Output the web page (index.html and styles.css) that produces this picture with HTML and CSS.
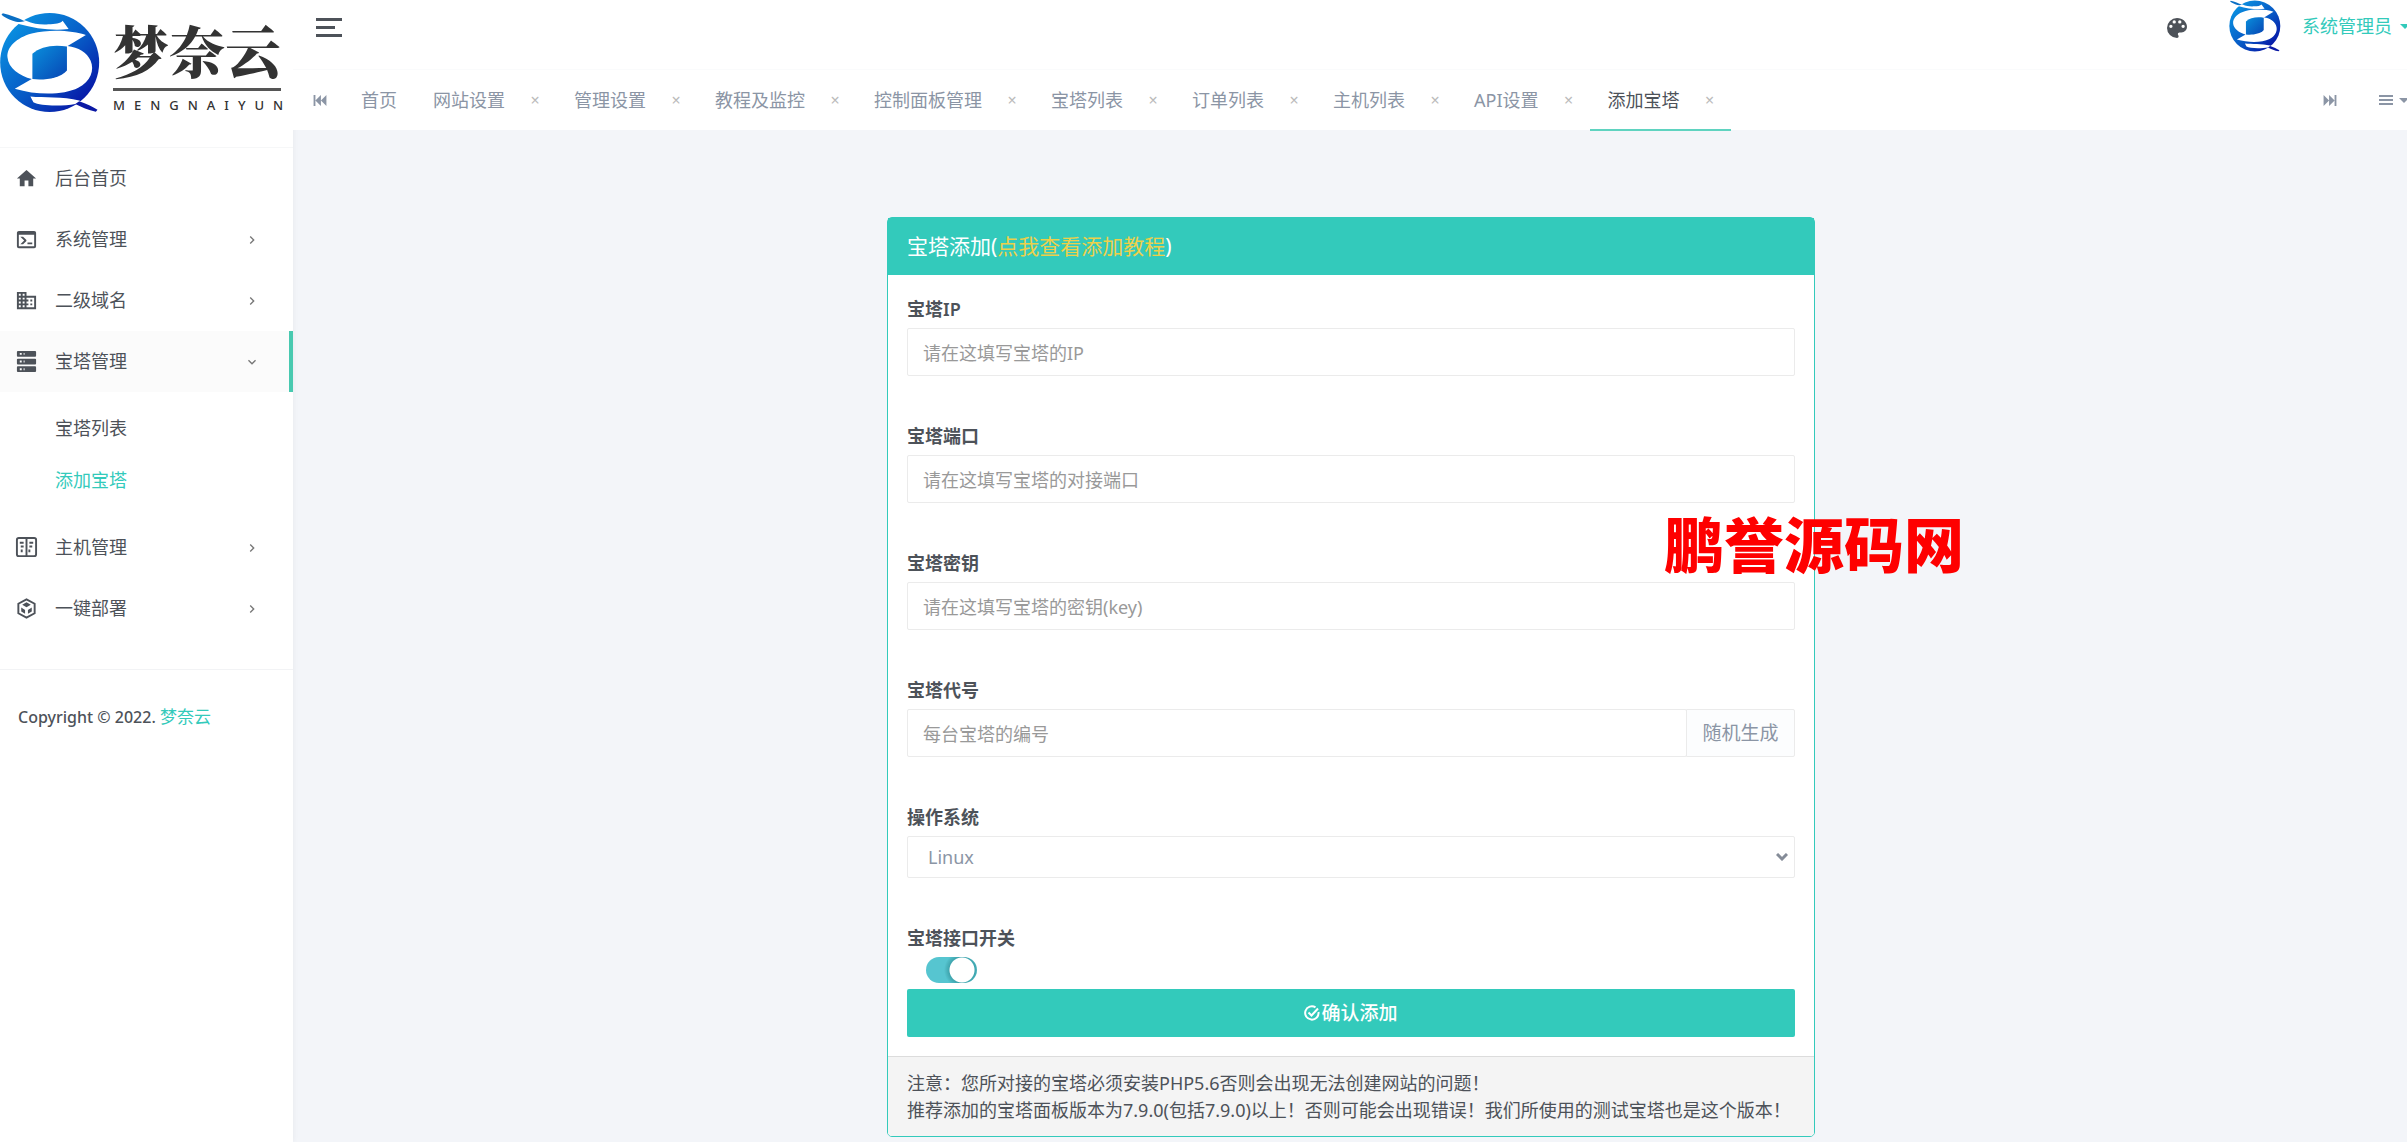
FILE: index.html
```html
<!DOCTYPE html>
<html lang="zh-CN">
<head>
<meta charset="utf-8">
<title>添加宝塔</title>
<link rel="stylesheet" href="styles.css">
</head>
<body>
<svg class="defs" aria-hidden="true">
  <defs>
    <linearGradient id="blue" x1="0" y1="0" x2="1" y2="1">
      <stop offset="0.1" stop-color="#0a93e2"/>
      <stop offset="0.55" stop-color="#0757c4"/>
      <stop offset="0.95" stop-color="#0708a0"/>
    </linearGradient>
    <linearGradient id="core" x1="0" y1="0" x2="1" y2="1">
      <stop offset="0" stop-color="#0a8fdc"/>
      <stop offset="1" stop-color="#0745b4"/>
    </linearGradient>
    <symbol id="emblem" viewBox="0 34 300 304">
      <circle cx="149" cy="186" r="149" fill="url(#blue)"/>
      <path fill="#fff" d="M40 50L78 60C100 70 125 73 145 71C165 70 182 68 188 60L206 85C160 91 105 84 56 70Z"/>
      <path fill="#0a6fc4" d="M8 38C30 44 55 52 74 62C60 66 48 64 38 60C24 55 12 50 4 42Z"/>
      <path fill="#fff" d="M258 103C220 90 150 84 95 99C48 112 20 140 22 170C24 202 58 226 95 236L44 265C110 285 190 285 235 262C272 243 285 210 272 180C262 155 235 140 203 136Z"/>
      <path fill="url(#core)" d="M97 160C120 138 160 131 201 138V210C180 235 130 240 97 236Z"/>
      <path fill="#fff" d="M91 288C130 292 190 288 238 300L256 312L226 311C190 318 120 318 100 306Z"/>
      <path fill="#0a18a4" d="M238 303C260 310 278 320 293 328L288 334C265 329 245 321 226 311Z"/>
    </symbol>
    <symbol id="chevron" viewBox="0 0 24 24"><path d="M8.59 16.58L13.17 12L8.59 7.41L10 6L16 12L10 18Z"/></symbol>
  </defs>
</svg>
<div class="layout">
  <aside class="sidebar">
    <a class="brand" href="#">
      <svg class="brand-mark" aria-hidden="true"><use href="#emblem"/></svg>
      <span class="brand-text">
        <span class="brand-name">梦奈云</span>
        <span class="brand-sub">MENGNAIYUN</span>
      </span>
    </a>
    <nav class="menu">
      <a class="item" href="#">
        <svg class="icon" viewBox="0 0 24 24"><path d="M10 20V14H14V20H19V12H22L12 3L2 12H5V20Z"/></svg>
        <span>后台首页</span>
      </a>
      <a class="item" href="#">
        <svg class="icon" viewBox="0 0 24 24"><path d="M20 19V7H4V19H20M20 3A2 2 0 0 1 22 5V19A2 2 0 0 1 20 21H4A2 2 0 0 1 2 19V5C2 3.89 2.9 3 4 3H20M13 17V15H18V17H13M9.58 13L5.57 9H8.4L11.7 12.3C12.09 12.69 12.09 13.33 11.7 13.72L8.42 17H5.59Z"/></svg>
        <span>系统管理</span>
        <svg class="arrow"><use href="#chevron"/></svg>
      </a>
      <a class="item" href="#">
        <svg class="icon" viewBox="0 0 24 24"><path d="M18 15H16V17H18M18 11H16V13H18M20 19H12V17H14V15H12V13H14V11H12V9H20M10 7H8V5H10M10 11H8V9H10M10 15H8V13H10M10 19H8V17H10M6 7H4V5H6M6 11H4V9H6M6 15H4V13H6M6 19H4V17H6M12 7V3H2V21H22V7Z"/></svg>
        <span>二级域名</span>
        <svg class="arrow"><use href="#chevron"/></svg>
      </a>
      <a class="item open" href="#">
        <svg class="icon" viewBox="0 0 24 24"><path fill-rule="evenodd" d="M3 1H21A1 1 0 0 1 22 2V6A1 1 0 0 1 21 7H3A1 1 0 0 1 2 6V2A1 1 0 0 1 3 1M3 9H21A1 1 0 0 1 22 10V14A1 1 0 0 1 21 15H3A1 1 0 0 1 2 14V10A1 1 0 0 1 3 9M3 17H21A1 1 0 0 1 22 18V22A1 1 0 0 1 21 23H3A1 1 0 0 1 2 22V18A1 1 0 0 1 3 17M5 3V5H7V3M9 3V5H10V3M5 11V13H7V11M9 11V13H10V11M5 19V21H7V19M9 19V21H10V19"/></svg>
        <span>宝塔管理</span>
        <svg class="arrow"><use href="#chevron"/></svg>
      </a>
      <div class="submenu">
        <a href="#">宝塔列表</a>
        <a class="current" href="#">添加宝塔</a>
      </div>
      <a class="item" href="#">
        <svg class="icon line" viewBox="0 0 24 24"><rect x="2" y="2" width="20" height="19" rx="2"/><path d="M12 2V21M5 7H9M15 7H19M6 11H9M15 11H18M7 14V17M15 14V17"/></svg>
        <span>主机管理</span>
        <svg class="arrow"><use href="#chevron"/></svg>
      </a>
      <a class="item" href="#">
        <svg class="icon line" viewBox="0 0 24 24"><path d="M12 2.500L20.500 7V17L12 21.500L3.500 17V7Z"/><path class="solid" d="M12 5.500L16.500 8.200L12 10.800L7.500 8.200ZM6.500 11L10.500 13.500V17.500L6.500 15ZM17.500 11L13.500 13.500V17.500L17.500 15Z"/></svg>
        <span>一键部署</span>
        <svg class="arrow"><use href="#chevron"/></svg>
      </a>
    </nav>
    <p class="copyright">Copyright © 2022. <a href="#">梦奈云</a></p>
  </aside>

  <div class="page">
    <header class="topbar">
      <button class="toggler" type="button" aria-label="折叠菜单"><i></i><i></i><i></i></button>
      <div class="tools">
        <button class="bare" type="button" aria-label="主题">
          <svg class="palette" viewBox="3 3 18 18"><path fill-rule="evenodd" d="M17.500 12A1.500 1.500 0 1 1 17.500 9A1.500 1.500 0 1 1 17.500 12M14.500 8A1.500 1.500 0 1 1 14.500 5A1.500 1.500 0 1 1 14.500 8M9.500 8A1.500 1.500 0 1 1 9.500 5A1.500 1.500 0 1 1 9.500 8M6.500 12A1.500 1.500 0 1 1 6.500 9A1.500 1.500 0 1 1 6.500 12M12 3A9 9 0 0 0 12 21A1.500 1.500 0 0 0 13.500 19.500C13.500 19.110 13.350 18.760 13.110 18.500C12.880 18.230 12.730 17.880 12.730 17.500A1.500 1.500 0 0 1 14.230 16H16A5 5 0 0 0 21 11C21 6.580 16.970 3 12 3Z"/></svg>
        </button>
        <a class="user" href="#">
          <svg class="avatar" aria-hidden="true"><use href="#emblem"/></svg>
          <span>系统管理员</span>
          <i class="caret"></i>
        </a>
      </div>
    </header>

    <div class="tabbar">
      <button class="bare" type="button" aria-label="向左滚动">
        <svg class="skip" viewBox="0 0 14 12"><path d="M0 0H2V12H0ZM8 0V12L2 6ZM14 0V12L8 6Z"/></svg>
      </button>
      <nav class="tabs">
        <a class="tab" href="#">首页</a>
        <a class="tab" href="#">网站设置<span class="close">×</span></a>
        <a class="tab" href="#">管理设置<span class="close">×</span></a>
        <a class="tab" href="#">教程及监控<span class="close">×</span></a>
        <a class="tab" href="#">控制面板管理<span class="close">×</span></a>
        <a class="tab" href="#">宝塔列表<span class="close">×</span></a>
        <a class="tab" href="#">订单列表<span class="close">×</span></a>
        <a class="tab" href="#">主机列表<span class="close">×</span></a>
        <a class="tab" href="#">API设置<span class="close">×</span></a>
        <a class="tab active" href="#">添加宝塔<span class="close">×</span></a>
      </nav>
      <button class="bare" type="button" aria-label="向右滚动">
        <svg class="skip" viewBox="0 0 14 12"><path d="M12 0H14V12H12ZM6 0V12L12 6ZM0 0V12L6 6Z"/></svg>
      </button>
      <button class="bare more" type="button" aria-label="标签操作">
        <svg class="bars" viewBox="0 0 14 10"><path d="M0 0H14V2H0ZM0 4H14V6H0ZM0 8H14V10H0Z"/></svg>
        <i class="caret"></i>
      </button>
    </div>

    <main class="content">
      <form class="card">
        <header class="card-head">宝塔添加(<a href="#">点我查看添加教程</a>)</header>
        <div class="card-body">
          <div class="field">
            <label for="ip">宝塔IP</label>
            <input id="ip" type="text" placeholder="请在这填写宝塔的IP">
          </div>
          <div class="field">
            <label for="port">宝塔端口</label>
            <input id="port" type="text" placeholder="请在这填写宝塔的对接端口">
          </div>
          <div class="field">
            <label for="key">宝塔密钥</label>
            <input id="key" type="text" placeholder="请在这填写宝塔的密钥(key)">
          </div>
          <div class="field">
            <label for="code">宝塔代号</label>
            <div class="group">
              <input id="code" type="text" placeholder="每台宝塔的编号">
              <button type="button">随机生成</button>
            </div>
          </div>
          <div class="field">
            <label for="os">操作系统</label>
            <div class="select">
              <select id="os"><option>Linux</option><option>Windows</option></select>
              <svg viewBox="0 0 12 8"><path d="M1 1L6 6L11 1"/></svg>
            </div>
          </div>
          <div class="field last">
            <label for="switch">宝塔接口开关</label>
            <input id="switch" class="switch" type="checkbox" checked>
          </div>
          <button class="submit" type="submit">
            <svg viewBox="0 0 16 16"><path d="M14.500 7A6.700 6.700 0 1 1 11.500 2.300M4.500 7.500L7.500 10.500L14 3.500"/></svg>确认添加
          </button>
        </div>
        <footer class="card-foot">
          <p>注意：您所对接的宝塔必须安装PHP5.6否则会出现无法创建网站的问题！</p>
          <p>推荐添加的宝塔面板版本为7.9.0(包括7.9.0)以上！否则可能会出现错误！我们所使用的测试宝塔也是这个版本！</p>
        </footer>
        <div class="watermark">鹏誉源码网</div>
      </form>
    </main>
  </div>
</div>
</body>
</html>
```
FILE: styles.css
```css
* { box-sizing: border-box; }

body {
  margin: 0;
  background: #f3f5f9;
  color: #4d5259;
  font: 18px/27px "Noto Sans", "Noto Sans CJK SC", sans-serif;
}

a { color: inherit; text-decoration: none; }
p { margin: 0; }
button, input, select { font: inherit; }
svg { display: block; flex: none; fill: currentColor; }
.defs { position: absolute; width: 0; height: 0; }

.layout { display: flex; min-height: 100vh; }

/* Sidebar */
.sidebar {
  flex: none;
  width: 293px;
  background: #fff;
  box-shadow: 0 0 6px rgba(0, 0, 0, 0.06);
}
.brand {
  display: flex;
  gap: 13px;
  height: 148px;
  padding-top: 12px;
  border-bottom: 1px solid #f6f7f8;
  color: #333;
}
.brand-mark { width: 100px; height: 101px; }
.brand-text { display: flex; flex-direction: column; width: 168px; }
.brand-name {
  height: 79px;
  border-bottom: 3px solid #555;
  font: 900 56px/74px "Noto Serif CJK SC", "Noto Sans CJK SC", serif;
}
.brand-sub {
  margin-top: 6px;
  font-size: 13px;
  line-height: 16px;
  font-weight: 500;
  letter-spacing: 9px;
  white-space: nowrap;
}
.menu { padding-bottom: 30px; border-bottom: 1px solid #f2f3f5; }
.item {
  display: flex;
  align-items: center;
  height: 61px;
  padding: 0 33px 0 15px;
}
.item .icon { width: 23px; height: 23px; margin-right: 17px; }
.icon.line { fill: none; stroke: currentColor; stroke-width: 2; }
.icon .solid { fill: currentColor; stroke: none; }
.arrow { width: 16px; height: 16px; margin-left: auto; color: #777; }
.item.open { background: #fbfbfb; border-right: 4px solid #48c9b0; padding-right: 29px; }
.open .arrow { transform: rotate(90deg); }
.submenu { padding: 10px 0 11px; }
.submenu a { display: block; padding-left: 55px; line-height: 52px; }
.submenu .current, .copyright a { color: #33cabb; }
.copyright {
  padding: 33px 18px;
  font-size: 16px;
  font-weight: 500;
}
.copyright a { font-size: 17px; font-weight: 400; }

/* Top bar and tabs */
.page { flex: 1; min-width: 0; }
.bare {
  display: flex;
  align-items: center;
  gap: 6px;
  padding: 0;
  border: 0;
  background: none;
  color: #8b95a5;
}
.topbar {
  display: flex;
  justify-content: space-between;
  height: 70px;
  padding-left: 23px;
  background: #fff;
  border-bottom: 1px solid #fafbfc;
}
.toggler {
  display: flex;
  flex-direction: column;
  gap: 5px;
  padding: 18px 0 0;
  border: 0;
  background: none;
}
.toggler i { width: 26px; height: 3px; background: #4d5259; }
.toggler i:nth-child(2) { width: 19px; }
.tools { display: flex; align-items: flex-start; gap: 42px; overflow: hidden; }
.tools .bare { height: 56px; color: #4d5259; }
.palette { width: 20px; height: 20px; }
.user { display: flex; align-items: center; height: 52px; color: #33cabb; }
.avatar { width: 52px; height: 52px; margin-right: 21px; }
.caret {
  width: 0;
  border: 5px solid transparent;
  border-top-color: currentColor;
  border-bottom: 0;
}
.user .caret { margin: 0 -3px 0 8px; }
.tabbar {
  display: flex;
  align-items: center;
  height: 60px;
  padding-left: 20px;
  background: #fff;
}
.tabs { display: flex; flex: 1; padding-left: 16px; }
.tab {
  display: flex;
  align-items: center;
  height: 62px;
  padding: 2px 18px 0;
  border-bottom: 2px solid transparent;
  color: #8b95a5;
  white-space: nowrap;
}
.tab .close {
  width: 16px;
  margin: 0 -5px 0 22px;
  color: #bbb;
  font-size: 16px;
  text-align: center;
}
.tab.active { border-bottom-color: #5fd3c0; color: #4d5259; }
.skip { width: 14px; height: 11px; }
.bars { width: 14px; height: 10px; }
.more { margin: 0 -2px 0 42px; }

/* Form card */
.content { padding: 87px 18px 5px 20px; }
.card {
  position: relative;
  max-width: 928px;
  margin: 0 auto;
  background: #fff;
  border: 1px solid #33cabb;
  border-radius: 5px;
}
.card-head {
  padding: 15px 19px;
  background: #33cabb;
  color: #fff;
  font-size: 21px;
}
.card-head a { color: #edd04a; }
.card-body { padding: 21px 19px 19px; }
.field { margin-bottom: 47px; }
.field.last { margin-bottom: 6px; }
.field label { display: block; margin-bottom: 5px; font-weight: 600; }
.field input[type="text"], .field select {
  display: block;
  width: 100%;
  height: 48px;
  padding: 1px 15px 0;
  border: 1px solid #ebebeb;
  border-radius: 2px;
  background: #fff;
  color: #8b95a5;
}
.field ::placeholder { color: #999; opacity: 1; }
.group { display: flex; }
.group button {
  flex: none;
  width: 109px;
  margin-left: -1px;
  padding: 0;
  border: 1px solid #ebebeb;
  border-radius: 0 2px 2px 0;
  background: #fcfdfe;
  color: #8b95a5;
  font-size: 19px;
}
.select { display: grid; align-items: center; }
.select > * { grid-area: 1 / 1; }
.field select { height: 42px; padding: 0 20px; appearance: none; }
.select svg {
  justify-self: end;
  width: 12px;
  height: 8px;
  margin-right: 7px;
  fill: none;
  stroke: #858c98;
  stroke-width: 3;
  pointer-events: none;
}
.switch {
  display: block;
  appearance: none;
  width: 51px;
  height: 26px;
  margin: 0 0 0 19px;
  border-radius: 13px;
  background: radial-gradient(circle at 36px 13px, #fff 12px, #3fa5ae 13px, #56c5d0 18px);
}
.submit {
  display: flex;
  align-items: center;
  justify-content: center;
  gap: 1px;
  width: 100%;
  height: 48px;
  border: 0;
  border-radius: 2px;
  background: #33cabb;
  color: #fff;
  font-size: 19px;
  font-weight: 500;
}
.submit svg { width: 16px; height: 16px; fill: none; stroke: currentColor; stroke-width: 2; }
.card-foot {
  padding: 13px 19px 12px;
  border-top: 1px solid #dcdcdc;
  border-radius: 0 0 4px 4px;
  background: #f4f4f4;
}

/* Site mark laid over the card's right edge */
.watermark {
  position: absolute;
  top: 282px;
  left: calc(100% - 150px);
  color: #fe0000;
  font-size: 60px;
  line-height: 90px;
  font-weight: 900;
  white-space: nowrap;
  pointer-events: none;
}
```
